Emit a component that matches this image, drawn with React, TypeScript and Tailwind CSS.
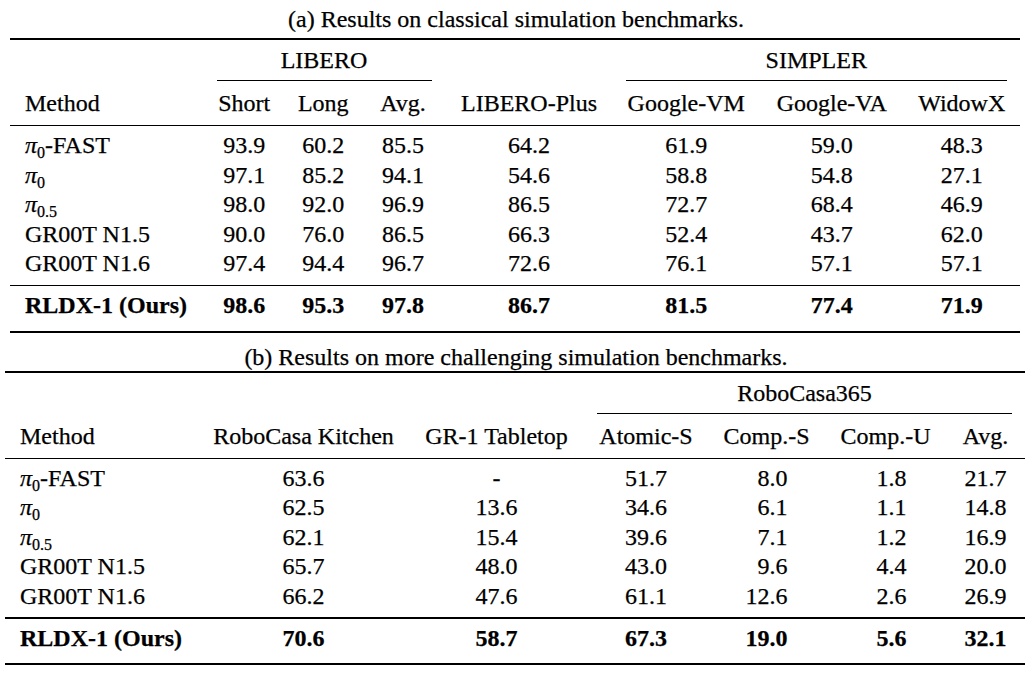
import React from "react";

type Method = "pifast" | "pi0" | "pi05" | "n15" | "n16" | "ours";

const rowsA: [Method, string[]][] = [
  ["pifast", ["93.9", "60.2", "85.5", "64.2", "61.9", "59.0", "48.3"]],
  ["pi0", ["97.1", "85.2", "94.1", "54.6", "58.8", "54.8", "27.1"]],
  ["pi05", ["98.0", "92.0", "96.9", "86.5", "72.7", "68.4", "46.9"]],
  ["n15", ["90.0", "76.0", "86.5", "66.3", "52.4", "43.7", "62.0"]],
  ["n16", ["97.4", "94.4", "96.7", "72.6", "76.1", "57.1", "57.1"]],
];
const oursA = ["98.6", "95.3", "97.8", "86.7", "81.5", "77.4", "71.9"];

// "~" = phantom leading digit (\phantom{0})
const rowsB: [Method, string[]][] = [
  ["pifast", ["63.6", "-", "51.7", "~8.0", "~1.8", "21.7"]],
  ["pi0", ["62.5", "13.6", "34.6", "~6.1", "~1.1", "14.8"]],
  ["pi05", ["62.1", "15.4", "39.6", "~7.1", "~1.2", "16.9"]],
  ["n15", ["65.7", "48.0", "43.0", "~9.6", "~4.4", "20.0"]],
  ["n16", ["66.2", "47.6", "61.1", "12.6", "~2.6", "26.9"]],
];
const oursB = ["70.6", "58.7", "67.3", "19.0", "~5.6", "32.1"];

const gridA = "grid grid-cols-[192.5px_83.5px_74.5px_85px_167px_147.5px_143.5px_116.5px]";
const gridB = "grid grid-cols-[193px_211px_175px_124px_117px_121px_79px]";

function Pi({ sub, rest }: { sub: string; rest?: string }) {
  return (
    <span>
      <span className="italic">π</span>
      <span className="relative top-[5px] text-[16px]">{sub}</span>
      {rest}
    </span>
  );
}

function MethodName({ m }: { m: Method }) {
  if (m === "pifast") return <Pi sub="0" rest="-FAST" />;
  if (m === "pi0") return <Pi sub="0" />;
  if (m === "pi05") return <Pi sub="0.5" />;
  if (m === "n15") return <span>GR00T N1.5</span>;
  if (m === "n16") return <span>GR00T N1.6</span>;
  return <span className="font-bold">RLDX-1 (Ours)</span>;
}

function Num({ v }: { v: string }) {
  if (v.startsWith("~"))
    return (
      <span>
        <span className="invisible">0</span>
        {v.slice(1)}
      </span>
    );
  return <span>{v}</span>;
}

function Rule({ thick }: { thick?: boolean }) {
  return <div className={thick ? "h-[2px] bg-black" : "h-[1.3px] bg-black"} />;
}

function Caption({ children, top }: { children: React.ReactNode; top: string }) {
  return <div className={`${top} h-[38px] text-center leading-[28px]`}>{children}</div>;
}

function TableA() {
  return (
    <div className="ml-[10px] w-[1010px]">
      <Rule thick />
      <div className={`${gridA} h-[40px] leading-[40px] text-center`}>
        <div className="col-start-2 col-span-3">LIBERO</div>
        <div className="col-start-6 col-span-3">SIMPLER</div>
      </div>
      <div className={`${gridA} h-px`}>
        <div className="col-start-2 col-span-3 mx-[14px] h-px bg-black" />
        <div className="col-start-6 col-span-3 mx-[13px] h-px bg-black" />
      </div>
      <div className={`${gridA} h-[44px] leading-[44px] text-center`}>
        <div className="pl-[15px] text-left">Method</div>
        <div>Short</div>
        <div>Long</div>
        <div>Avg.</div>
        <div>LIBERO-Plus</div>
        <div>Google-VM</div>
        <div>Google-VA</div>
        <div>WidowX</div>
      </div>
      <Rule />
      <div className="pt-[5px] pb-[6px]">
        {rowsA.map(([m, vals]) => (
          <div key={m} className={`${gridA} h-[29.5px] leading-[29.5px] text-center`}>
            <div className="pl-[15px] text-left whitespace-nowrap">
              <MethodName m={m} />
            </div>
            {vals.map((v, i) => (
              <div key={i}>
                <Num v={v} />
              </div>
            ))}
          </div>
        ))}
      </div>
      <Rule />
      <div className="pt-[5px] pb-[10px]">
        <div className={`${gridA} h-[29.5px] leading-[29.5px] text-center font-bold`}>
          <div className="pl-[15px] text-left whitespace-nowrap">
            <MethodName m="ours" />
          </div>
          {oursA.map((v, i) => (
            <div key={i}>{v}</div>
          ))}
        </div>
      </div>
      <Rule thick />
    </div>
  );
}

function TableB() {
  return (
    <div className="ml-[5px] w-[1020px]">
      <Rule thick />
      <div className={`${gridB} h-[40px] leading-[40px] text-center`}>
        <div className="col-start-4 col-span-4">RoboCasa365</div>
      </div>
      <div className={`${gridB} h-px`}>
        <div className="col-start-4 col-span-4 mx-[13px] h-px bg-black" />
      </div>
      <div className={`${gridB} h-[44px] leading-[44px] text-center`}>
        <div className="pl-[15px] text-left">Method</div>
        <div>RoboCasa Kitchen</div>
        <div>GR-1 Tabletop</div>
        <div>Atomic-S</div>
        <div>Comp.-S</div>
        <div>Comp.-U</div>
        <div>Avg.</div>
      </div>
      <Rule />
      <div className="pt-[5px] pb-[6px]">
        {rowsB.map(([m, vals]) => (
          <div key={m} className={`${gridB} h-[29.5px] leading-[29.5px] text-center`}>
            <div className="pl-[15px] text-left whitespace-nowrap">
              <MethodName m={m} />
            </div>
            {vals.map((v, i) => (
              <div key={i}>
                <Num v={v} />
              </div>
            ))}
          </div>
        ))}
      </div>
      <Rule />
      <div className="pt-[5px] pb-[10px]">
        <div className={`${gridB} h-[29.5px] leading-[29.5px] text-center font-bold`}>
          <div className="pl-[15px] text-left whitespace-nowrap">
            <MethodName m="ours" />
          </div>
          {oursB.map((v, i) => (
            <div key={i}>
              <Num v={v} />
            </div>
          ))}
        </div>
      </div>
      <Rule thick />
    </div>
  );
}

export default function App() {
  return (
    <div className="h-[676px] w-[1032px] overflow-hidden bg-white font-['Liberation_Serif',serif] text-[24px] text-black [-webkit-text-stroke:0.25px_black]">
      <Caption top="pt-[5px]">(a) Results on classical simulation benchmarks.</Caption>
      <TableA />
      <Caption top="pt-[10px]">(b) Results on more challenging simulation benchmarks.</Caption>
      <TableB />
    </div>
  );
}
